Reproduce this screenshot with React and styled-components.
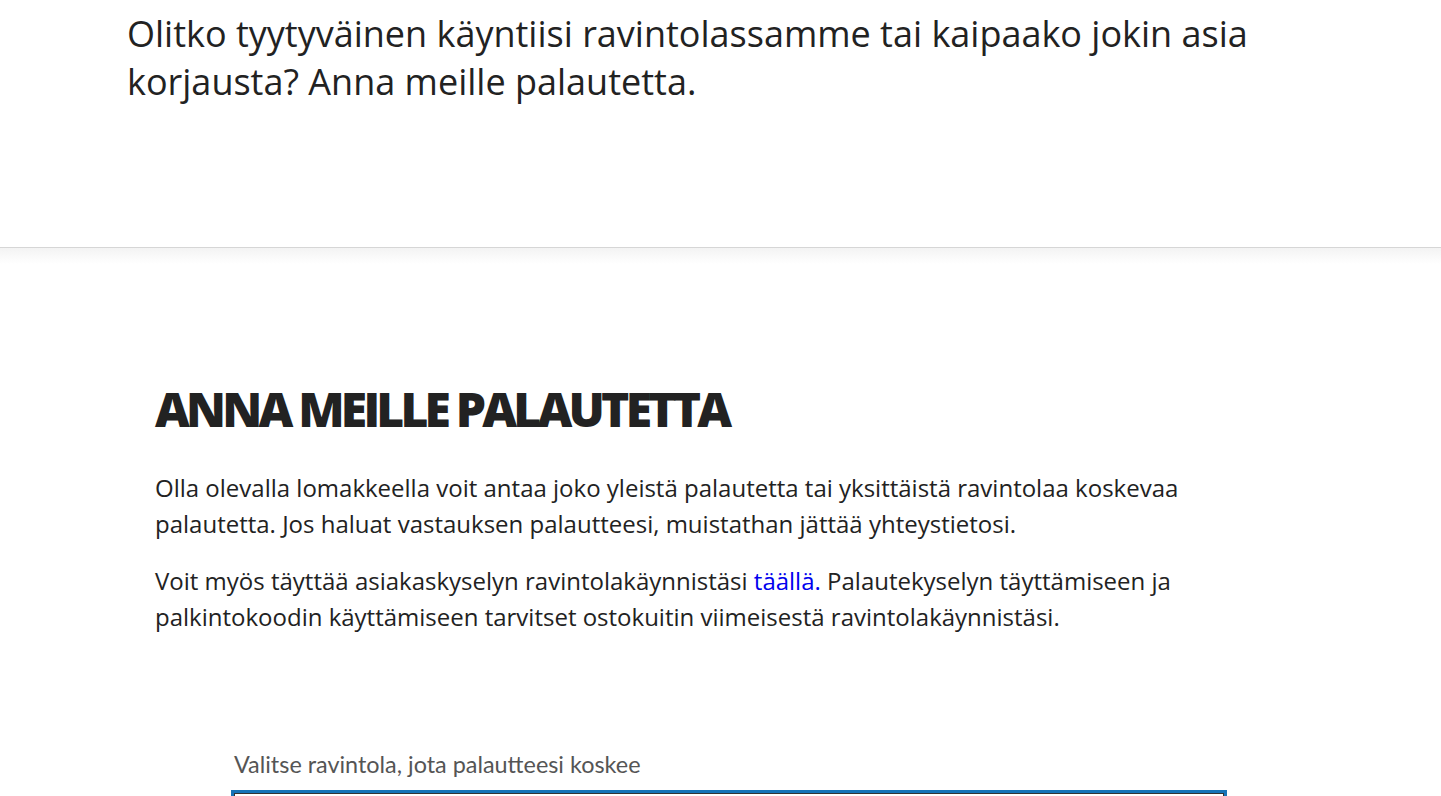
import styled, { createGlobalStyle } from "styled-components";

const GlobalStyle = createGlobalStyle`
  html, body {
    margin: 0;
    padding: 0;
    background: #fff;
  }
  body {
    font-family: "Open Sans", "Liberation Sans", sans-serif;
    color: #222;
    overflow: hidden;
  }
`;

function App() {
  return (
    <Page>
      <GlobalStyle />
      <Hero>
        <Lead>
          Olitko tyytyväinen käyntiisi ravintolassamme tai kaipaako jokin asia
          korjausta? Anna meille palautetta.
        </Lead>
      </Hero>
      <Main>
        <Content>
          <Title>ANNA MEILLE PALAUTETTA</Title>
          <Text>
            Olla olevalla lomakkeella voit antaa joko yleistä palautetta tai
            yksittäistä ravintolaa koskevaa palautetta. Jos haluat vastauksen
            palautteesi, muistathan jättää yhteystietosi.
          </Text>
          <Text>
            Voit myös täyttää asiakaskyselyn ravintolakäynnistäsi{" "}
            <Link href="#">täällä.</Link> Palautekyselyn täyttämiseen ja
            palkintokoodin käyttämiseen tarvitset ostokuitin viimeisestä
            ravintolakäynnistäsi.
          </Text>
          <Form>
            <Label>Valitse ravintola, jota palautteesi koskee</Label>
            <Select />
          </Form>
        </Content>
      </Main>
    </Page>
  );
}

const Page = styled.div`
  width: 100%;
  height: 796px;
  overflow: hidden;
`;

const Hero = styled.header`
  height: 237px;
  padding: 10px 127px 0;
  border-bottom: 1px solid #d6d6d6;
`;

const Lead = styled.p`
  margin: 0;
  max-width: 1187px;
  font-size: 36px;
  line-height: 48px;
  font-weight: 400;
  color: #222;
`;

const Main = styled.main`
  background: linear-gradient(to bottom, #f3f3f3 0px, #ffffff 16px, #ffffff 100%);
  padding: 132px 0 0 155px;
`;

const Content = styled.section`
  width: 1131px;
`;

const Title = styled.h2`
  margin: 0 0 32px;
  font-size: 48px;
  line-height: 1.2;
  font-weight: 800;
  letter-spacing: -3.8px;
  color: #222;
`;

const Text = styled.p`
  margin: 0 0 21px;
  font-size: 24px;
  line-height: 36px;
  color: #222;
`;

const Link = styled.a`
  color: #0000ee;
  text-decoration: none;
`;

const Form = styled.form`
  margin: 115px 0 0 76px;
  width: 996px;
`;

const Label = styled.label`
  display: block;
  font-family: Lato, "Liberation Sans", sans-serif;
  font-size: 23.4px;
  line-height: 28px;
  color: #555;
  padding-left: 3px;
  margin-bottom: 12px;
`;

const Select = styled.div`
  height: 48px;
  border: 3px solid #1673b7;
  box-shadow: inset 0 0 0 1px #333;
  background: #fff;
`;

export default App;
